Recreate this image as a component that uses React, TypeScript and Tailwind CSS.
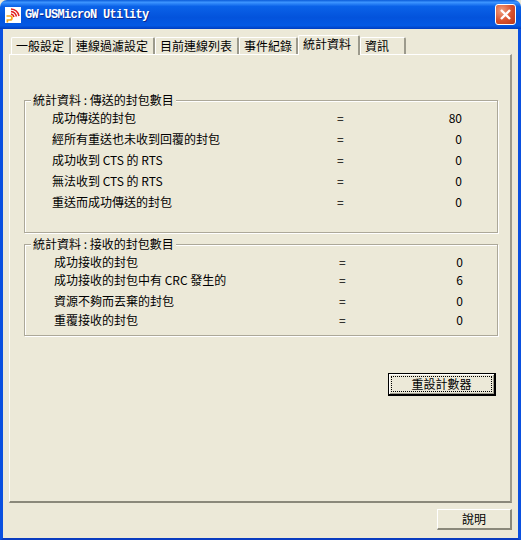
const cjk = "font-['Noto_Sans_CJK_TC','Liberation_Sans',sans-serif]";

const tabs = ['一般設定', '連線過濾設定', '目前連線列表', '事件紀錄', '統計資料', '資訊'];
const tabWidths = ['w-[60px]', 'w-[84px]', 'w-[84px]', 'w-[59px]', 'w-[62px]', 'w-[46px]'];

const sent = [
  ['成功傳送的封包', '80'],
  ['經所有重送也未收到回覆的封包', '0'],
  ['成功收到 CTS 的 RTS', '0'],
  ['無法收到 CTS 的 RTS', '0'],
  ['重送而成功傳送的封包', '0'],
];

const received = [
  ['成功接收的封包', '0', ''],
  ['成功接收的封包中有 CRC 發生的', '6', 'mt-[2px]'],
  ['資源不夠而丟棄的封包', '0', 'mt-[5px]'],
  ['重覆接收的封包', '0', 'mt-[3px]'],
];

function Row({ label, value, className }: { label: string; value: string; className: string }) {
  return (
    <div className={`flex items-center ${className}`}>
      <span className="w-[285px] whitespace-nowrap">{label}</span>
      <span className="w-[100px]">=</span>
      <span className="flex-1 text-right">{value}</span>
    </div>
  );
}

function Legend({ children }: { children: string }) {
  return (
    <span className="absolute left-[6px] top-[-9px] bg-[#ece9d8] px-[2px] leading-[16px] whitespace-nowrap">
      {children}
    </span>
  );
}

export default function App() {
  return (
    <div className={`w-[521px] h-[540px] flex flex-col overflow-hidden text-[12px] text-black ${cjk} bg-[#ece9d8]`}>
      {/* Title bar */}
      <div className="h-[29px] shrink-0 flex items-center justify-between pl-[5px] pr-[5px] rounded-t-[7px] bg-[linear-gradient(180deg,#0a5bd8_0%,#3d95ff_8%,#0a62e8_22%,#0353dc_60%,#0459e4_88%,#003dc0_100%)]">
        <div className="flex items-center">
          <svg width="16" height="16" viewBox="0 0 16 16" className="shrink-0">
            <rect width="16" height="16" fill="#fff" />
            <path d="M6 2 a9 9 0 0 1 8 7 M6 4.5 a6.5 6.5 0 0 1 5.5 5 M6 7 a4 4 0 0 1 3 3" stroke="#e0201c" strokeWidth="1.5" fill="none" />
            <path d="M1.5 9 h3.5 a2 2 0 0 1 0 4 h-2.6 v2.5" stroke="#f5a81c" strokeWidth="1.7" fill="none" />
          </svg>
          <span className="ml-[4px] font-['Liberation_Mono',monospace] font-bold text-[12px] tracking-[-0.7px] text-white [text-shadow:1px_1px_0_#0a2a90]">
            GW-USMicroN Utility
          </span>
        </div>
        <div className="w-[21px] h-[21px] rounded-[3px] border border-white bg-[radial-gradient(circle_at_30%_30%,#f0a080,#d8502c_55%,#b8381a)] flex items-center justify-center">
          <svg width="13" height="13" viewBox="0 0 13 13">
            <path d="M2 2 L11 11 M11 2 L2 11" stroke="#fff" strokeWidth="2.4" />
          </svg>
        </div>
      </div>

      {/* Window body */}
      <div className="flex-1 flex flex-col border-x-[3px] border-b-[3px] border-x-[#0a50e0] border-b-[#0a3cc0] px-[6px] pt-[6px] pb-[8px]">
        <div className="flex h-[19px] items-end pl-[2px] shrink-0">
          {tabs.map((tab, i) => {
            const active = i === 4;
            return (
              <div
                key={tab}
                className={`${tabWidths[i]} flex items-center pl-[4px] border-l border-t border-r-2 border-l-white border-t-white border-r-[#9c9a8c] rounded-t-[2px] ${
                  active ? 'h-[20px] pb-[3px] relative z-10 -mb-[1px] bg-[#ece9d8]' : 'h-[17px] pb-[1px]'
                }`}
              >
                {tab}
              </div>
            );
          })}
        </div>

        <div className="h-[449px] shrink-0 border-l border-t border-l-white border-t-white border-r-2 border-b-2 border-r-[#9c9a8c] border-b-[#8a887a] pl-[14px] pt-[45px]">
          {/* Sent packets */}
          <div className="relative w-[474px] h-[133px] border border-[#aca899] shadow-[inset_1px_1px_0_#fff,1px_1px_0_#fff] pt-[6px] pl-[27px]">
            <Legend>統計資料 : 傳送的封包數目</Legend>
            {sent.map(([label, value]) => (
              <Row key={label} label={label} value={value} className="w-[410px] h-[21px]" />
            ))}
          </div>

          {/* Received packets */}
          <div className="relative w-[474px] h-[92px] mt-[11px] border border-[#aca899] shadow-[inset_1px_1px_0_#fff,1px_1px_0_#fff] pt-[9px] pl-[29px]">
            <Legend>統計資料 : 接收的封包數目</Legend>
            {received.map(([label, value, spacing]) => (
              <Row key={label} label={label} value={value} className={`w-[409px] h-[16px] ${spacing}`} />
            ))}
          </div>

          <div className="w-[472px] flex justify-end mt-[37px]">
            <div className="w-[108px] h-[23px] border border-black border-r-2 border-b-2 bg-[#ece9d8] shadow-[inset_1px_1px_0_#fff,inset_-1px_-1px_0_#9c9a8c] p-[2px]">
              <div className="h-full border border-dotted border-black flex items-center justify-center">
                重設計數器
              </div>
            </div>
          </div>
        </div>

        <div className="flex justify-end mt-[6px]">
          <div className="w-[75px] h-[21px] pb-[1px] border-l border-t border-l-white border-t-white border-r-2 border-b-2 border-r-[#8a887a] border-b-[#8a887a] flex items-center justify-center">
            說明
          </div>
        </div>
      </div>
    </div>
  );
}
